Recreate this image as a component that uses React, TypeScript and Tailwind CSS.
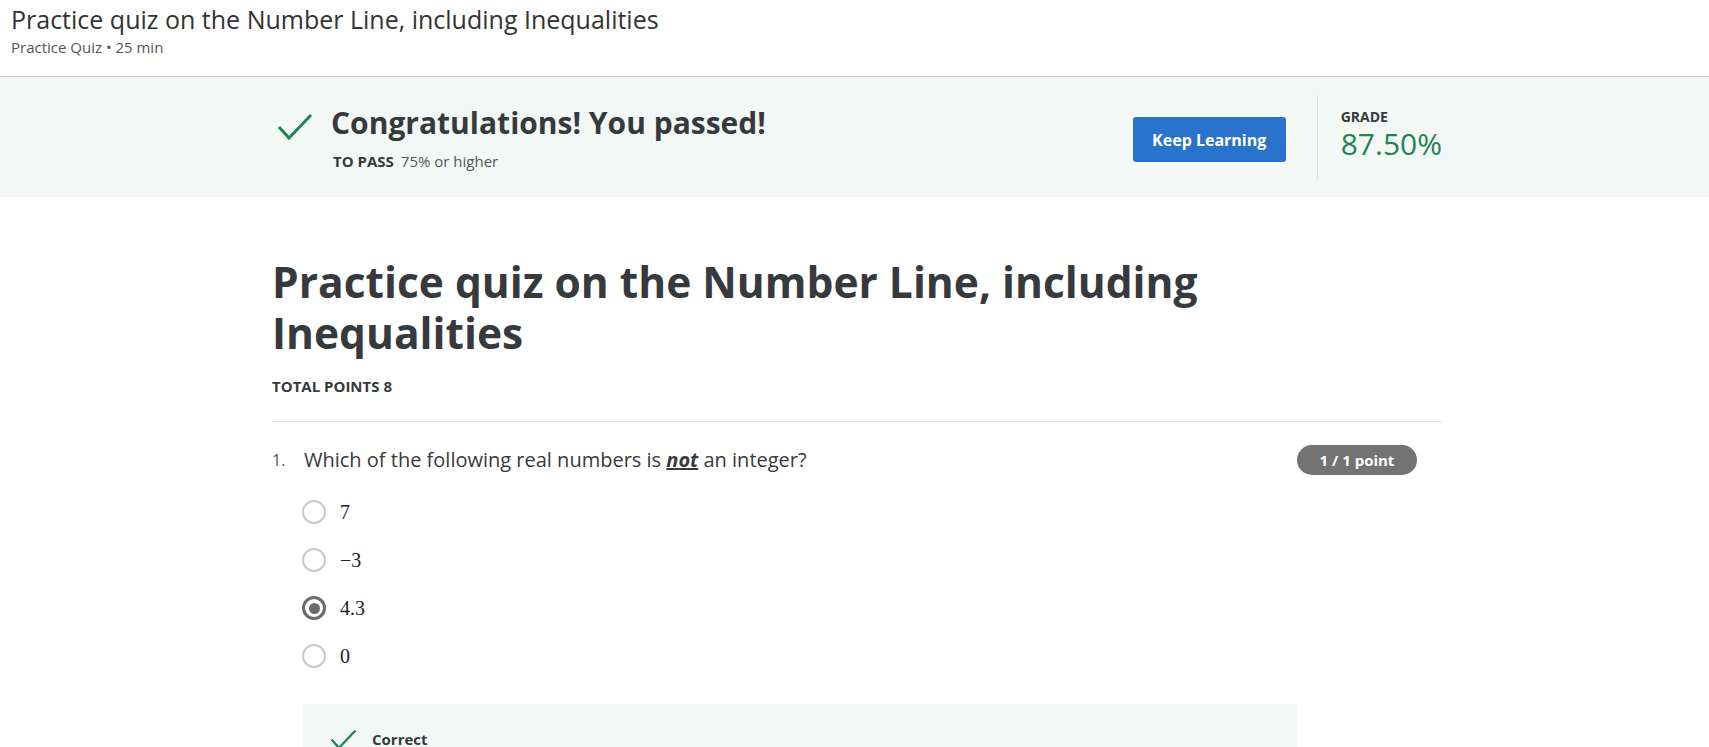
const OPTIONS = [
  { label: "7", selected: false },
  { label: "\u22123", selected: false },
  { label: "4.3", selected: true },
  { label: "0", selected: false },
];

function Check({ className }: { className?: string }) {
  return (
    <svg viewBox="0 0 36 28" className={className} fill="none">
      <polyline points="2,14 12,25 34,2" stroke="#1f8354" strokeWidth="3" />
    </svg>
  );
}

export default function App() {
  return (
    <div className="min-h-screen bg-white font-['Open_Sans',sans-serif] text-[#373a3c]">
      {/* top bar */}
      <header className="h-[77px] border-b border-[#c8c8c8] px-[11px] pt-[3px]">
        <h1 className="text-[25px] leading-[33px] text-[#333]">Practice quiz on the Number Line, including Inequalities</h1>
        <p className="mt-[1px] text-[15px] leading-[20px] text-[#555]">Practice Quiz • 25 min</p>
      </header>

      {/* result banner */}
      <section className="h-[120px] bg-[#f3f8f6]">
        <div className="mx-auto flex h-full w-[1175px] items-center justify-between pl-[5px]">
          <div className="flex items-start">
            <Check className="ml-[5px] mt-[10px] h-[28px] w-[36px]" />
            <div className="ml-[18px]">
              <h2 className="text-[30px] font-bold leading-[40px]">Congratulations! You passed!</h2>
              <p className="mt-[8px] pl-[2px] text-[15px] leading-[20px]">
                <span className="font-bold">TO PASS</span>
                <span className="ml-[7px] text-[#555]">75% or higher</span>
              </p>
            </div>
          </div>
          <div className="flex items-center">
            <button className="mt-[5px] h-[45px] w-[153px] rounded-[3px] bg-[#2a73cc] text-[16px] font-bold text-white">Keep Learning</button>
            <div className="ml-[31px] flex h-[84px] items-center border-l border-[#dcdcdc] pl-[23px]">
              <div className="pb-[5px]">
                <div className="text-[14px] font-bold leading-[18px]">GRADE</div>
                <div className="text-[30px] leading-[36px] text-[#1f8354]">87.50%</div>
              </div>
            </div>
          </div>
        </div>
      </section>

      <main className="mx-auto w-[1175px] pl-[5px] pt-[59px]">
        <h1 className="max-w-[1000px] text-[42.5px] font-bold leading-[51px]">Practice quiz on the Number Line, including Inequalities</h1>
        <p className="mt-[18px] text-[15px] font-bold leading-[20px]">TOTAL POINTS 8</p>
        <div className="mt-[25px] border-t border-[#e1e1e1]" />

        {/* question 1 */}
        <div className="flex items-center pt-[23px]">
          <span className="w-[32px] text-[16px] leading-[22px] text-[#555]">1.</span>
          <p className="flex-1 text-[20px] leading-[28px]">
            Which of the following real numbers is <span className="font-bold italic underline">not</span> an integer?
          </p>
          <span className="mr-[25px] flex h-[30px] w-[120px] items-center justify-center rounded-full bg-[#737373] text-[15px] font-bold text-white">1 / 1 point</span>
        </div>

        <div className="mt-[13px] pl-[30px]">
          {OPTIONS.map((o) => (
            <div key={o.label} className="flex h-[48px] items-center">
              {o.selected ? (
                <span className="flex h-[24px] w-[24px] items-center justify-center rounded-full border-[3px] border-[#6b6b6b]">
                  <span className="h-[11px] w-[11px] rounded-full bg-[#6b6b6b]" />
                </span>
              ) : (
                <span className="h-[24px] w-[24px] rounded-full border-2 border-[#c8c8c8]" />
              )}
              <span className="ml-[14px] font-['Liberation_Serif',serif] text-[20px] text-[#222]">{o.label}</span>
            </div>
          ))}
        </div>

        <div className="ml-[31px] mt-[24px] h-[120px] w-[994px] bg-[#f3f8f6] pl-[26.5px] pt-[25px]">
          <div className="flex items-start">
            <Check className="h-[21px] w-[27px]" />
            <span className="ml-[15.5px] text-[15px] font-bold leading-[20px]">Correct</span>
          </div>
        </div>
      </main>
    </div>
  );
}
